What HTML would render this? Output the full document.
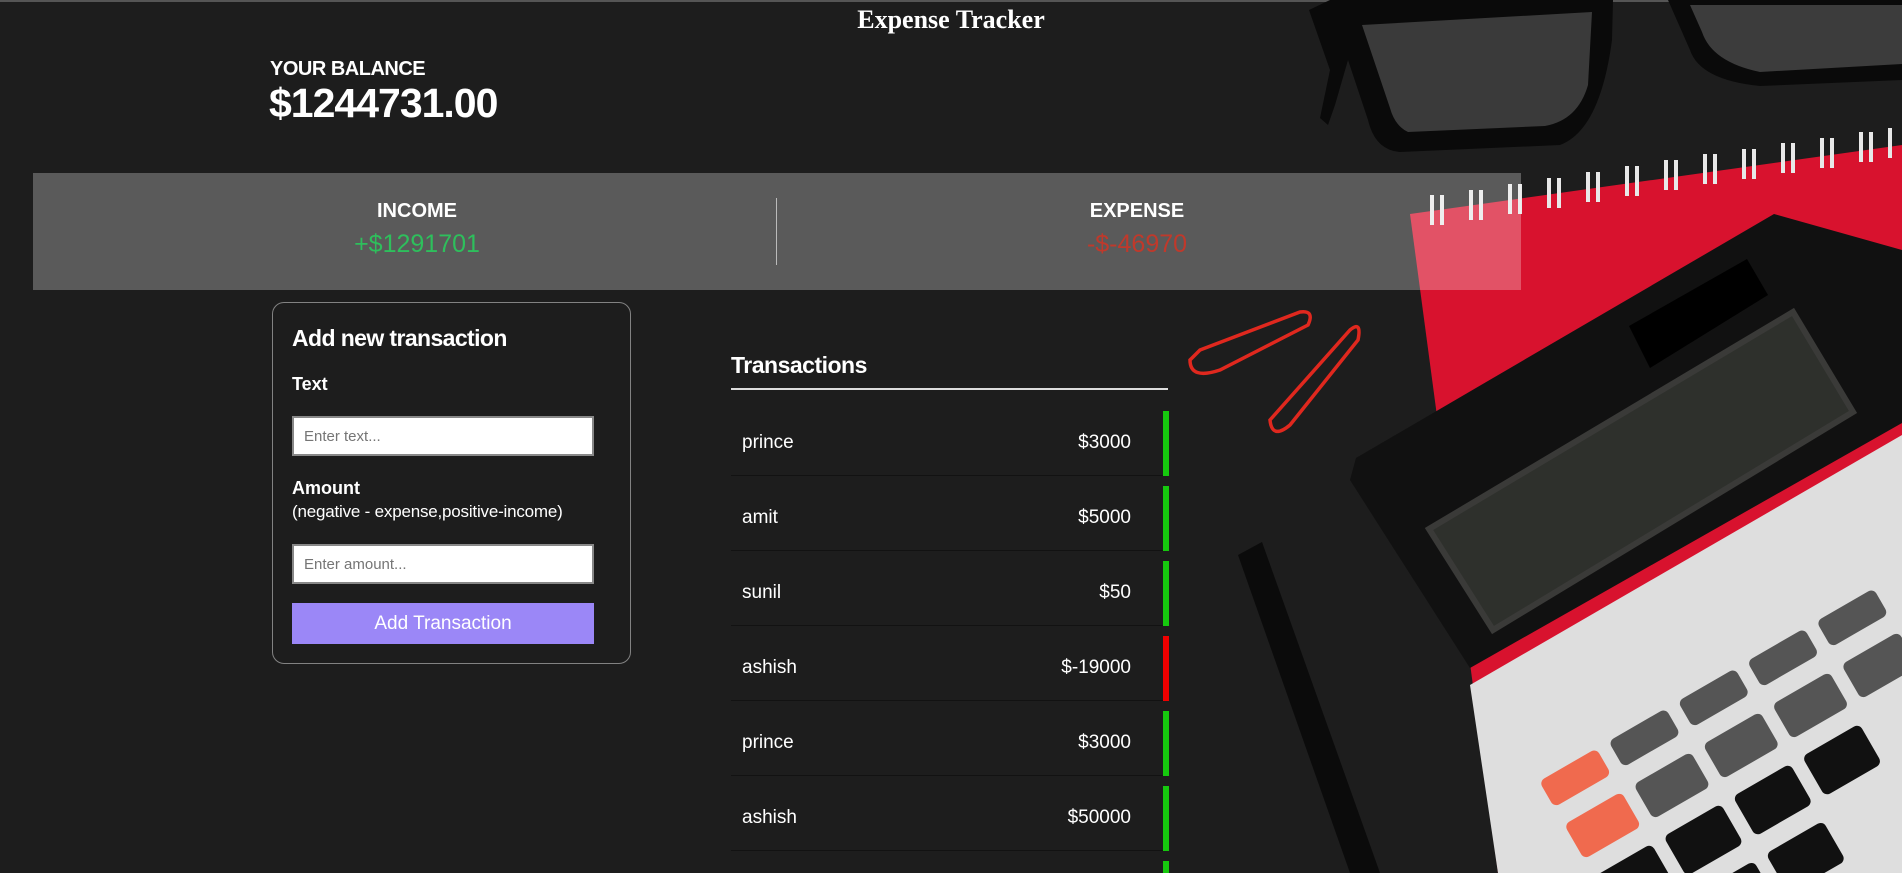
<!DOCTYPE html>
<html><head><meta charset="utf-8">
<style>
*{margin:0;padding:0;box-sizing:border-box}
html,body{width:1902px;height:873px;overflow:hidden}
body{background:#1d1d1d;font-family:"Liberation Sans",sans-serif;color:#fff;position:relative}
.bg{position:absolute;left:0;top:0;display:block}
.abs{position:absolute}
h1{position:absolute;left:0;width:1902px;top:5px;text-align:center;font-family:"Liberation Serif",serif;font-weight:bold;font-size:26px}
.band{position:absolute;left:33px;top:173px;width:1488px;height:117px;background:rgba(255,255,255,0.27)}
.lbl{font-weight:bold;font-size:20px;text-align:center;position:absolute;width:300px}
.amt{font-size:25px;text-align:center;position:absolute;width:300px}
.form{position:absolute;left:272px;top:302px;width:359px;height:362px;border:1px solid rgba(255,255,255,0.45);border-radius:12px}
.inp{position:absolute;left:19px;width:302px;height:40px;background:#fff;border:2px solid #888;color:#757575;font-size:15px;padding:10px 10px}
.btn{position:absolute;left:19px;top:300px;width:302px;height:41px;background:#9b87f7;color:#fff;font-size:19px;text-align:center;line-height:41px}
.row{position:absolute;left:731px;width:438px;height:65px;border-bottom:1px solid rgba(0,0,0,0.35)}
.row .n{position:absolute;left:11px;top:21px;font-size:19px}
.row .a{position:absolute;right:38px;top:21px;font-size:19px}
.row .b{position:absolute;right:0;top:0;width:6px;height:65px;background:#16c80e}
</style></head><body>
<svg class="bg" width="1902" height="873" viewBox="0 0 1902 873" overflow="hidden">
<rect x="0" y="0" width="1902" height="2" fill="#555"/>
<path d="M1309 10 L1330 0 L1613 0 L1612 40 Q1600 130 1560 145 L1400 152 Q1375 150 1368 120 L1348 60 L1335 105 L1328 125 L1320 118 L1330 70 Z" fill="#0a0a0a"/>
<path d="M1362 25 L1592 12 L1588 85 Q1578 120 1545 126 L1408 132 Q1395 126 1390 108 Z" fill="#3a3a3a"/>
<path d="M1668 0 L1902 0 L1902 80 L1760 86 Q1700 80 1690 50 Z" fill="#0a0a0a"/>
<path d="M1690 5 L1902 5 L1902 64 L1760 72 Q1712 62 1702 32 Z" fill="#3c3c3c"/>
<path d="M1410 214 L1902 145 L1902 873 L1498 873 Z" fill="#d8122e"/>
<g stroke="#e8e8e8" stroke-width="4" fill="none">
<path d="M1432 195 v30 M1442 195 v30 M1471 190 v30 M1481 190 v30 M1510 184 v30 M1520 184 v30 M1549 178 v30 M1559 178 v30 M1588 172 v30 M1598 172 v30 M1627 166 v30 M1637 166 v30 M1666 160 v30 M1676 160 v30 M1705 154 v30 M1715 154 v30 M1744 149 v30 M1754 149 v30 M1783 143 v30 M1793 143 v30 M1822 138 v30 M1832 138 v30 M1861 132 v30 M1871 132 v30 M1890 128 v30"/>
</g>
<g stroke="#e0281e" stroke-width="3.5" fill="none">
<path d="M1200 350 L1300 312 Q1315 310 1308 325 L1220 370 Q1190 380 1190 360 Z"/>
<path d="M1270 420 L1350 330 Q1362 320 1358 340 L1290 425 Q1272 440 1270 420 Z"/>
</g>
<path d="M1238 555 L1262 542 L1380 873 L1350 873 Z" fill="#0b0b0b"/>
<path d="M1356 458 L1774 214 L1902 250 L1902 423 L1470 668 L1350 480 Z" fill="#111"/>
<path d="M1429 529 L1793 312 L1853 412 L1493 630 Z" fill="#2e302c" stroke="#3a3a38" stroke-width="6"/>
<path d="M1629 326 L1747 259 L1768 295 L1650 368 Z" fill="#000"/>
<path d="M1470 685 L1902 435 L1902 873 L1498 873 Z" fill="#dedede"/>
<g transform="rotate(-30 1700 700)">
<rect x="1520" y="690" width="66" height="30" rx="6" fill="#f06a4e"/>
<rect x="1600" y="690" width="66" height="30" rx="6" fill="#555"/>
<rect x="1680" y="690" width="66" height="30" rx="6" fill="#555"/>
<rect x="1760" y="690" width="66" height="30" rx="6" fill="#555"/>
<rect x="1840" y="690" width="66" height="30" rx="6" fill="#555"/>
<rect x="1520" y="740" width="66" height="40" rx="6" fill="#f06a4e"/>
<rect x="1600" y="740" width="66" height="40" rx="6" fill="#555"/>
<rect x="1680" y="740" width="66" height="40" rx="6" fill="#555"/>
<rect x="1760" y="740" width="66" height="40" rx="6" fill="#555"/>
<rect x="1840" y="740" width="66" height="40" rx="6" fill="#555"/>
<rect x="1520" y="800" width="66" height="46" rx="6" fill="#111"/>
<rect x="1600" y="800" width="66" height="46" rx="6" fill="#111"/>
<rect x="1680" y="800" width="66" height="46" rx="6" fill="#111"/>
<rect x="1760" y="800" width="66" height="46" rx="6" fill="#111"/>
<rect x="1520" y="866" width="66" height="46" rx="6" fill="#111"/>
<rect x="1600" y="866" width="66" height="46" rx="6" fill="#111"/>
<rect x="1680" y="866" width="66" height="46" rx="6" fill="#111"/>
</g>
</svg>

<h1>Expense Tracker</h1>
<div class="abs" style="left:270px;top:58px;font-size:20px;font-weight:bold;letter-spacing:-0.5px">YOUR BALANCE</div>
<div class="abs" style="left:269px;top:80px;font-size:41px;font-weight:bold;letter-spacing:-1px">$1244731.00</div>

<div class="band">
<div class="lbl" style="left:234px;top:27px">INCOME</div>
<div class="amt" style="left:234px;top:57px;color:#2ebf5c">+$1291701</div>
<div class="abs" style="left:743px;top:25px;width:1px;height:67px;background:#bbb"></div>
<div class="lbl" style="left:954px;top:27px">EXPENSE</div>
<div class="amt" style="left:954px;top:57px;color:#c0392b">-$-46970</div>
</div>

<div class="form">
<div class="abs" style="left:19px;top:22px;font-size:23px;font-weight:bold;letter-spacing:-0.6px">Add new transaction</div>
<div class="abs" style="left:19px;top:71px;font-size:18px;font-weight:bold">Text</div>
<div class="inp" style="top:113px">Enter text...</div>
<div class="abs" style="left:19px;top:175px;font-size:18px;font-weight:bold">Amount</div>
<div class="abs" style="left:19px;top:199px;font-size:17px;letter-spacing:-0.2px">(negative - expense,positive-income)</div>
<div class="inp" style="top:241px">Enter amount...</div>
<div class="btn">Add Transaction</div>
</div>

<div class="abs" style="left:731px;top:352px;font-size:23px;font-weight:bold;letter-spacing:-0.5px">Transactions</div>
<div class="abs" style="left:731px;top:388px;width:437px;height:2px;background:#ddd"></div>

<div class="row" style="top:411px"><span class="n">prince</span><span class="a">$3000</span><span class="b"></span></div>
<div class="row" style="top:486px"><span class="n">amit</span><span class="a">$5000</span><span class="b"></span></div>
<div class="row" style="top:561px"><span class="n">sunil</span><span class="a">$50</span><span class="b"></span></div>
<div class="row" style="top:636px"><span class="n">ashish</span><span class="a">$-19000</span><span class="b" style="background:#f00000"></span></div>
<div class="row" style="top:711px"><span class="n">prince</span><span class="a">$3000</span><span class="b"></span></div>
<div class="row" style="top:786px"><span class="n">ashish</span><span class="a">$50000</span><span class="b"></span></div>
<div class="abs" style="left:1163px;top:861px;width:6px;height:12px;background:#16c80e"></div>
</body></html>
